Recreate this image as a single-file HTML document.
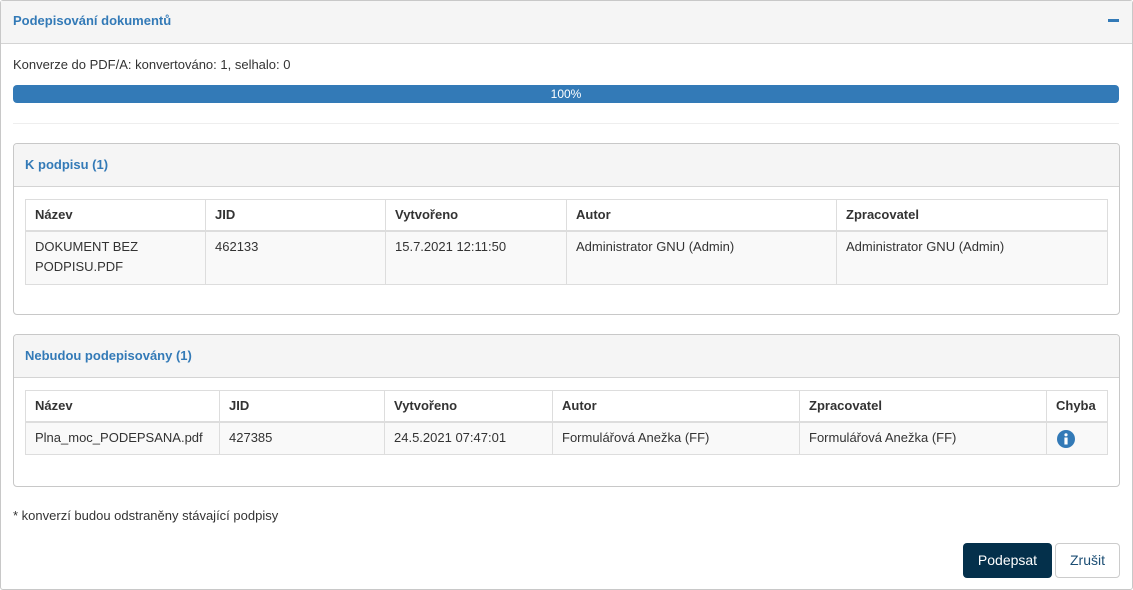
<!DOCTYPE html><html><head><meta charset="utf-8"><style>
*{box-sizing:border-box}body{margin:0;width:1133px;height:590px;background:#fff;font-family:"Liberation Sans",Arial,sans-serif;font-size:13px;color:#333;position:relative;overflow:hidden}
.a{position:absolute}
.outer{left:0;top:0;width:1133px;height:590px;border:1px solid #c8c8c8;border-radius:3px}
.hd{background:#f5f5f5;border-bottom:1px solid #d4d4d4}
.ttl{color:#337ab7;font-weight:bold;font-size:13px}
.pn{border:1px solid #c8c8c8;border-radius:4px;overflow:hidden}
table{border-collapse:collapse;position:absolute;font-size:13px}
td,th{border:1px solid #ddd;text-align:left;vertical-align:top;padding:5px 9px 6px;line-height:20px}
th{padding:5px 9px;border-bottom:2px solid #ddd}
tr.b td{background:#f9f9f9}
</style></head><body>
<div class="a outer"></div>
<div class="a hd" style="left:1px;top:1px;width:1131px;height:43px"></div>
<div class="a ttl" style="left:13px;top:13px">Podepisování dokumentů</div>
<div class="a" style="left:1108px;top:19px;width:11px;height:3px;background:#337ab7"></div>
<div class="a" style="left:13px;top:57px">Konverze do PDF/A: konvertováno: 1, selhalo: 0</div>
<div class="a" style="left:13px;top:85px;width:1106px;height:18px;background:#337ab7;border-radius:4px;color:#fff;font-size:12px;text-align:center;line-height:18px">100%</div>
<div class="a" style="left:13px;top:123px;width:1106px;height:1px;background:#eee"></div>

<div class="a pn" style="left:13px;top:143px;width:1107px;height:172px"><div class="hd" style="height:43px"></div></div>
<div class="a ttl" style="left:25px;top:157px">K podpisu (1)</div>
<table style="left:25px;top:199px;width:1083px">
<tr><th style="width:180px">Název</th><th style="width:180px">JID</th><th style="width:181px">Vytvořeno</th><th style="width:270px">Autor</th><th>Zpracovatel</th></tr>
<tr class="b"><td style="padding-bottom:7px">DOKUMENT BEZ PODPISU.PDF</td><td>462133</td><td>15.7.2021 12:11:50</td><td>Administrator GNU (Admin)</td><td>Administrator GNU (Admin)</td></tr>
</table>

<div class="a pn" style="left:13px;top:334px;width:1107px;height:153px"><div class="hd" style="height:43px"></div></div>
<div class="a ttl" style="left:25px;top:348px">Nebudou podepisovány (1)</div>
<table style="left:25px;top:390px;width:1083px">
<tr><th style="width:194px">Název</th><th style="width:165px">JID</th><th style="width:168px">Vytvořeno</th><th style="width:247px">Autor</th><th style="width:247px">Zpracovatel</th><th>Chyba</th></tr>
<tr class="b"><td>Plna_moc_PODEPSANA.pdf</td><td>427385</td><td>24.5.2021 07:47:01</td><td>Formulářová Anežka (FF)</td><td>Formulářová Anežka (FF)</td><td><svg width="18" height="18" viewBox="0 0 18 18" style="vertical-align:middle;margin-left:1px"><circle cx="9" cy="9" r="9" fill="#337ab7"/><circle cx="9" cy="4.8" r="1.6" fill="#fff"/><rect x="7.4" y="7.5" width="3.2" height="7" fill="#fff"/></svg></td></tr>
</table>

<div class="a" style="left:13px;top:508px">* konverzí budou odstraněny stávající podpisy</div>
<div class="a" style="left:963px;top:543px;width:89px;height:35px;background:#04304b;border-radius:4px;color:#fff;text-align:center;line-height:35px;font-size:14px">Podepsat</div>
<div class="a" style="left:1055px;top:543px;width:65px;height:35px;border:1px solid #ccc;border-radius:4px;color:#1c4e74;text-align:center;line-height:33px;font-size:14px">Zrušit</div>
</body></html>
